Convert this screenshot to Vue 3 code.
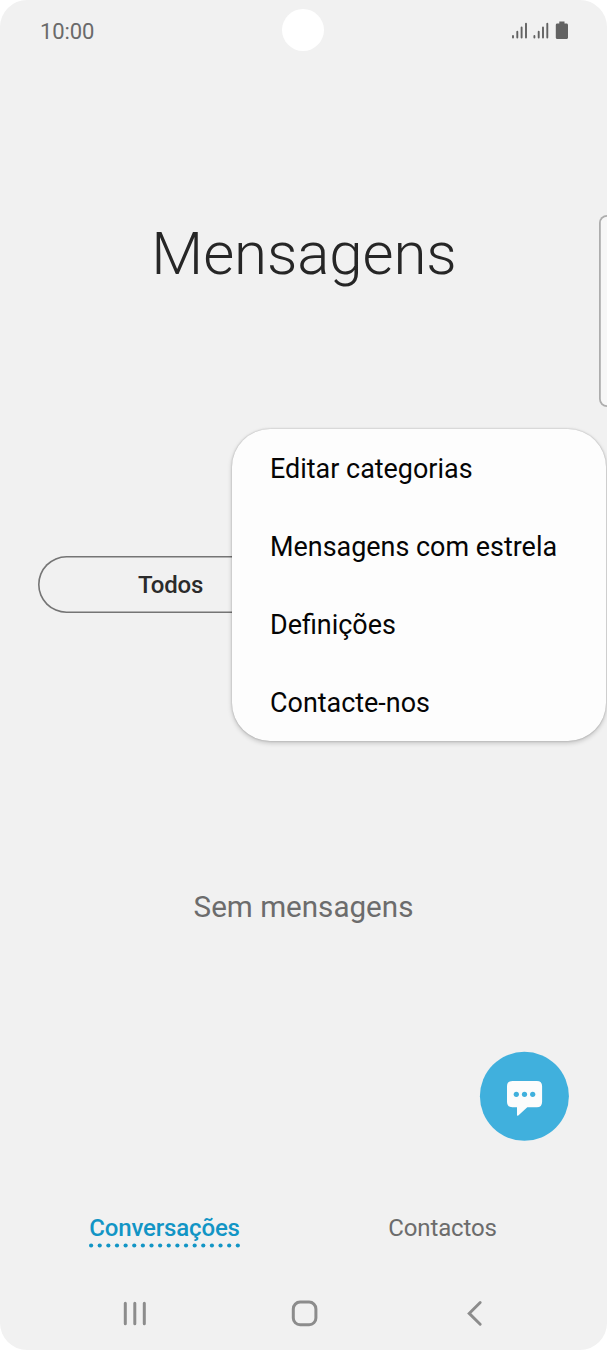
<script setup>
const menuItems = ['Editar categorias', 'Mensagens com estrela', 'Definições', 'Contacte-nos']
const dots = Array.from({ length: 18 }, (_, i) => 2.1 + i * 8.63)
</script>

<template>
  <div class="phone">
    <header class="status">
      <span class="time">10:00</span>
      <span class="camera"></span>
      <svg class="signals" width="60" height="22" viewBox="0 0 60 22">
        <g stroke="#626262" stroke-width="1.9" stroke-linecap="round">
          <path d="M3 17v1.6M7.3 12.800v5.800M11.6 8.500v10.100M16 4.800v13.800" />
          <path d="M24.4 17v1.600M28.7 12.800v5.800M33 8.500v10.100M37.300 4.800v13.800" />
        </g>
        <path d="M49.300 2.600h5.200v1.800h2c.9 0 1.500.6 1.500 1.500v12.500c0 .9-.6 1.500-1.500 1.500h-9.200c-.9 0-1.500-.6-1.500-1.500V5.900c0-.9.6-1.500 1.500-1.500h2z" fill="#626262" />
      </svg>
    </header>

    <h1 class="title">Mensagens</h1>

    <div class="filters">
      <div class="pill">Todos</div>
    </div>

    <p class="empty">Sem mensagens</p>

    <nav class="tabs">
      <div class="tab active">
        <span>Conversações</span>
        <svg class="dots" width="151" height="5" viewBox="0 0 151 5">
          <circle v-for="x in dots" :key="x" :cx="x" cy="2.5" r="2.1" fill="#1295c5" />
        </svg>
      </div>
      <div class="tab"><span>Contactos</span></div>
    </nav>

    <footer class="system">
      <svg width="30" height="30" viewBox="0 0 30 30" fill="none" stroke="#8c8c8c" stroke-width="3" stroke-linecap="round">
        <path d="M5.300 4.300v20.500M14.800 4.300v20.500M24.300 4.300v20.500" />
      </svg>
      <svg width="30" height="30" viewBox="0 0 30 30" fill="none" stroke="#8c8c8c" stroke-width="3">
        <rect x="3.300" y="3.100" width="22.600" height="22.600" rx="6.800" />
      </svg>
      <svg width="30" height="30" viewBox="0 0 30 30" fill="none" stroke="#8c8c8c" stroke-width="2.900" stroke-linecap="round">
        <path d="M20.200 3.500 9.200 14.400 20.200 25.300" />
      </svg>
    </footer>

    <div class="edge-panel"></div>

    <ul class="menu">
      <li v-for="item in menuItems" :key="item">{{ item }}</li>
    </ul>

    <svg class="fab" width="90" height="90" viewBox="0 0 90 90">
      <circle cx="45.400" cy="45.300" r="44.500" fill="#40b0dd" />
      <path d="M33.300 29.900h24.500q5.300 0 5.300 5.300v15.500q0 5.500-5.300 5.500h-9.500l-9 8.200q-1.300 1-1.300-.7v-7.500h-4.700q-5.300 0-5.300-5.500v-15.500q0-5.300 5.300-5.300z" fill="#fcfcfc" />
      <g fill="#40b0dd">
        <circle cx="37.300" cy="43.300" r="2.600" />
        <circle cx="45.500" cy="43.300" r="2.600" />
        <circle cx="53.700" cy="43.300" r="2.600" />
      </g>
    </svg>
  </div>
</template>

<style>
body {
  background: #fff;
}
</style>

<style scoped>
.phone {
  position: relative;
  display: flex;
  flex-direction: column;
  width: 607px;
  height: 1350px;
  overflow: hidden;
  background: #f1f1f1;
  border-radius: 27px;
  font-family: Roboto, "Liberation Sans", sans-serif;
}
.status {
  display: grid;
  grid-template-columns: 1fr 42px 1fr;
  align-items: center;
  height: 60px;
  padding: 0 37px 0 36px;
}
.time {
  padding: 4px 0 0 4px;
  font-size: 22px;
  line-height: 26px;
  letter-spacing: -0.1px;
  color: #6a6a6a;
}
.camera {
  width: 42px;
  height: 42px;
  border-radius: 50%;
  background: #fff;
}
.signals {
  justify-self: end;
}
.title {
  display: flex;
  align-items: center;
  justify-content: center;
  height: 80px;
  margin: 153px 0 0 1px;
  font-size: 60px;
  font-weight: 300;
  letter-spacing: -0.1px;
  color: #262626;
}
.filters {
  margin-top: 263px;
  padding: 0 38px;
}
.pill {
  display: flex;
  align-items: center;
  box-sizing: border-box;
  height: 56.500px;
  padding: 1px 0 0 100px;
  border-radius: 29px;
  box-shadow: inset 0 0 0 1.600px #757575;
  font-size: 24px;
  font-weight: 500;
  letter-spacing: -0.2px;
  color: #2b2b2b;
}
.empty {
  display: flex;
  align-items: center;
  justify-content: center;
  height: 60px;
  margin: 264px 0 0;
  font-size: 29.600px;
  color: #6c6c6c;
}
.tabs {
  display: grid;
  grid-template-columns: 278px 278px;
  justify-content: center;
  height: 40px;
  margin-top: 276.500px;
}
.tab {
  display: flex;
  flex-direction: column;
  align-items: center;
  font-size: 24px;
  line-height: 30px;
  letter-spacing: -0.15px;
  color: #6c6c6c;
}
.active {
  color: #1295c5;
  font-weight: 500;
}
.dots {
  display: block;
}
.system {
  display: grid;
  grid-template-columns: repeat(3, 170px);
  justify-content: center;
  justify-items: center;
  margin: 46px 0 0 2px;
}
.edge-panel {
  position: absolute;
  top: 215px;
  right: -10px;
  width: 18.500px;
  height: 192px;
  border-radius: 8px;
  background: #f7f7f7;
  box-shadow: inset 0 0 0 1.800px #adadad;
}
.menu {
  position: absolute;
  top: 429px;
  left: 232px;
  box-sizing: border-box;
  width: 374px;
  margin: 0;
  padding: 0 0 0 38px;
  list-style: none;
  background: #fdfdfd;
  border-radius: 38px;
  box-shadow: 0 0 2px rgba(0, 0, 0, 0.25), 0 2px 5px rgba(0, 0, 0, 0.2);
}
.menu li {
  height: 78px;
  font-size: 26.930px;
  line-height: 81px;
  color: #050505;
  white-space: nowrap;
}
.fab {
  position: absolute;
  top: 1051px;
  left: 479px;
}
</style>
